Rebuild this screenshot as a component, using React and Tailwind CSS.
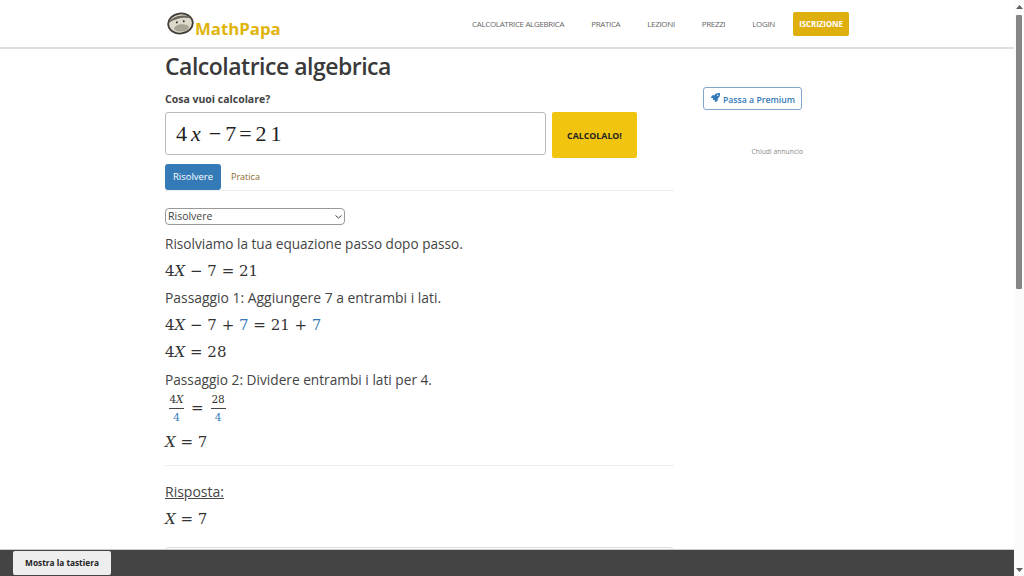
import React from "react";
import { FaRocket } from "react-icons/fa";

const sans = { fontFamily: '"Open Sans", "Noto Sans", sans-serif' };

function Logo() {
  return (
    <svg width="27" height="23" viewBox="0 0 27 23" className="shrink-0">
      <g transform="rotate(-6 13.5 11.5)">
        <ellipse cx="13.5" cy="11.5" rx="12.3" ry="10" fill="#ddd9cb" stroke="#3f3d38" strokeWidth="1.8" />
        <path d="M2 10 C4 3 21 1 25 8 C19 5 8 6 2 10Z" fill="#6b675c" />
        <ellipse cx="14" cy="16" rx="7.5" ry="3.6" fill="#a9a594" />
        <circle cx="10" cy="10" r="1" fill="#333" />
        <circle cx="17" cy="9.6" r="1" fill="#333" />
      </g>
    </svg>
  );
}

function M({ children, className = "" }) {
  return (
    <div className={`font-['DejaVu_Serif','Liberation_Serif',serif] text-[15px] leading-[24px] text-[#333] ${className}`}>
      {children}
    </div>
  );
}
const I = ({ children }) => <i className="italic">{children}</i>;
const B = ({ children }) => <span className="text-[#337ab7]">{children}</span>;

function Frac({ top, bottom }) {
  return (
    <span className="inline-flex flex-col items-center w-[15px] text-[10.5px] leading-[13px]">
      <span className="border-b border-[#444] w-full text-center pb-[2px] whitespace-nowrap">{top}</span>
      <span className="text-[#337ab7] pt-[2px]">{bottom}</span>
    </span>
  );
}

export default function App() {
  return (
    <div className="flex h-[576px] w-[1024px] overflow-hidden bg-white text-[#333]" style={sans}>
      <div className="relative flex-1 min-w-0 overflow-hidden">
        <header className="h-[49px] border-b-2 border-[#dfdfdf] flex items-center pl-[167px] pr-[165px]">
          <div className="flex items-end gap-[1px]">
            <Logo />
            <span className="text-[#dfb40d] text-[16.8px] font-bold leading-[20px] -mb-[4px]">MathPapa</span>
          </div>
          <nav className="ml-auto flex items-center gap-[27px] text-[8px] tracking-[-0.35px] text-[#666]">
            <span>CALCOLATRICE ALGEBRICA</span>
            <span>PRATICA</span>
            <span>LEZIONI</span>
            <span>PREZZI</span>
            <span>LOGIN</span>
            <span className="bg-[#dfb00d] text-white font-bold rounded-[2px] h-[24px] w-[56px] flex items-center justify-center -ml-[9px] tracking-[-0.1px]">ISCRIZIONE</span>
          </nav>
        </header>

        <div className="flex pl-[165px]">
          <main className="w-[509px]">
            <h1 className="text-[23px] tracking-[-0.5px] font-semibold leading-[34px] text-[#3a3a3a]">Calcolatrice algebrica</h1>
            <div className="text-[10.5px] font-bold mt-[8px] leading-[16px] text-[#444]">Cosa vuoi calcolare?</div>
            <div className="flex gap-[6px] mt-[5px]">
              <div className="w-[381px] h-[43px] border border-[#bbb] rounded-[3px] flex items-center pl-[10px] font-['Liberation_Serif',serif] text-[22px] text-[#222]">
                <span>4</span>
                <i className="ml-[4px]">x</i>
                <span className="ml-[8px]">−</span>
                <span className="ml-[4px]">7</span>
                <span className="ml-[3px]">=</span>
                <span className="ml-[4px]">2</span>
                <span className="ml-[4px]">1</span>
              </div>
              <button className="w-[85px] h-[46px] pt-[4px] bg-[#f1c40f] rounded-[2px] text-[8.8px] font-bold text-[#222]">CALCOLALO!</button>
            </div>
            <div className="flex items-stretch border-b border-[#eee] mt-[6px] h-[27px] text-[9.5px]">
              <span className="w-[56px] bg-[#337ab7] text-white rounded-[3px] flex items-center justify-center">Risolvere</span>
              <span className="ml-[10px] text-[#8b6a2b] flex items-center text-[9px]">Pratica</span>
            </div>
            <div className="relative w-[180px] mt-[17px]">
              <select className="block appearance-none pl-[2px] w-[180px] h-[17px] border border-[#999] rounded-[4px] text-[10.5px] text-[#444] bg-white" style={sans} defaultValue="Risolvere">
                <option>Risolvere</option>
              </select>
              <svg width="7" height="4" viewBox="0 0 7 4" className="absolute right-[3px] top-[7px]"><path d="M0.5 0.5L3.5 3L6.5 0.5" fill="none" stroke="#444" strokeWidth="1" /></svg>
            </div>
            <p className="text-[13.6px] leading-[20px] mt-[9px] text-[#444]">Risolviamo la tua equazione passo dopo passo.</p>
            <M className="mt-[5px]">4<I>X</I> − 7 = 21</M>
            <p className="text-[13.9px] leading-[20px] mt-[5px] text-[#444]">Passaggio 1: Aggiungere 7 a entrambi i lati.</p>
            <M className="mt-[5px]">4<I>X</I> − 7 + <B>7</B> = 21 + <B>7</B></M>
            <M className="mt-[3px]">4<I>X</I> = 28</M>
            <p className="text-[13.7px] leading-[20px] mt-[6px] text-[#444]">Passaggio 2: Dividere entrambi i lati per 4.</p>
            <M className="flex items-center gap-[7px] pl-[4px] h-[32px] mt-[2px]">
              <Frac top={<>4<I>X</I></>} bottom="4" />
              <span>=</span>
              <Frac top="28" bottom="4" />
            </M>
            <M className="mt-[6px]"><I>X</I> = 7</M>
            <div className="border-t border-[#eee] mt-[11px]" />
            <p className="text-[14px] leading-[20px] mt-[16px] underline text-[#444]">Risposta:</p>
            <M className="mt-[5px]"><I>X</I> = 7</M>
            <div className="border border-[#ddd] rounded-[4px] h-[30px] mt-[16px]" />
          </main>
          <aside className="ml-[29px] w-[100px] pt-[38px]">
            <div className="w-[99px] h-[23px] border border-[#7ea6cf] rounded-[3px] flex items-center justify-center gap-[3px] text-[8.7px] font-semibold text-[#337ab7]">
              <FaRocket size={9} className="-mt-[3px] ml-[1px]" />
              <span className="mt-[5px]">Passa a Premium</span>
            </div>
            <div className="text-[6.8px] text-[#8a8a8a] text-right mt-[37px]">Chiudi annuncio</div>
          </aside>
        </div>

        <div className="absolute left-0 right-0 bottom-0 h-[27px] bg-[#444] border-t border-[#ccc]">
          <button className="absolute left-[13px] top-[1px] w-[98px] h-[24px] bg-[#eee] rounded-[2px] text-[8.3px] font-bold text-[#222]">Mostra la tastiera</button>
        </div>
      </div>

      <aside className="w-[10px] shrink-0 bg-[#fbfbfb] flex flex-col items-center">
        <svg width="7" height="4" viewBox="0 0 7 4" className="mt-[5px]"><path d="M3.5 0L7 4H0Z" fill="#606060" /></svg>
        <div className="w-[6px] h-[274px] mt-[6px] bg-[#858585] rounded-[1px]" />
        <svg width="7" height="4" viewBox="0 0 7 4" className="mt-auto mb-[4px]"><path d="M0 0H7L3.5 4Z" fill="#606060" /></svg>
      </aside>
    </div>
  );
}
